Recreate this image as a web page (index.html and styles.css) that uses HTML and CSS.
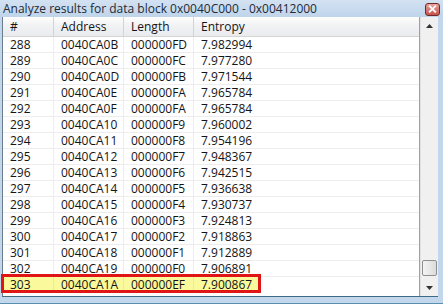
FILE: index.html
```html
<!DOCTYPE html>
<html>
<head>
<meta charset="utf-8">
<link rel="stylesheet" href="styles.css">
</head>
<body>
<div class="window">
  <div class="titlebar">
    <span class="title">Analyze results for data block 0x0040C000 - 0x00412000</span>
    <span class="close"><svg width="14" height="12" viewBox="0 0 14 12"><path d="M4 3 L10 9 M10 3 L4 9" stroke="#fff" stroke-width="2" stroke-linecap="square"/></svg></span>
  </div>
  <div class="body">
    <div class="list">
      <div class="row head">
        <div class="c c1">#</div><div class="c c2">Address</div><div class="c c3">Length</div><div class="c c4">Entropy</div>
      </div>
      <div class="row"><div class="c c1">288</div><div class="c c2">0040CA0B</div><div class="c c3">000000FD</div><div class="c c4">7.982994</div></div>
      <div class="row"><div class="c c1">289</div><div class="c c2">0040CA0C</div><div class="c c3">000000FC</div><div class="c c4">7.977280</div></div>
      <div class="row"><div class="c c1">290</div><div class="c c2">0040CA0D</div><div class="c c3">000000FB</div><div class="c c4">7.971544</div></div>
      <div class="row"><div class="c c1">291</div><div class="c c2">0040CA0E</div><div class="c c3">000000FA</div><div class="c c4">7.965784</div></div>
      <div class="row"><div class="c c1">292</div><div class="c c2">0040CA0F</div><div class="c c3">000000FA</div><div class="c c4">7.965784</div></div>
      <div class="row"><div class="c c1">293</div><div class="c c2">0040CA10</div><div class="c c3">000000F9</div><div class="c c4">7.960002</div></div>
      <div class="row"><div class="c c1">294</div><div class="c c2">0040CA11</div><div class="c c3">000000F8</div><div class="c c4">7.954196</div></div>
      <div class="row"><div class="c c1">295</div><div class="c c2">0040CA12</div><div class="c c3">000000F7</div><div class="c c4">7.948367</div></div>
      <div class="row"><div class="c c1">296</div><div class="c c2">0040CA13</div><div class="c c3">000000F6</div><div class="c c4">7.942515</div></div>
      <div class="row"><div class="c c1">297</div><div class="c c2">0040CA14</div><div class="c c3">000000F5</div><div class="c c4">7.936638</div></div>
      <div class="row"><div class="c c1">298</div><div class="c c2">0040CA15</div><div class="c c3">000000F4</div><div class="c c4">7.930737</div></div>
      <div class="row"><div class="c c1">299</div><div class="c c2">0040CA16</div><div class="c c3">000000F3</div><div class="c c4">7.924813</div></div>
      <div class="row"><div class="c c1">300</div><div class="c c2">0040CA17</div><div class="c c3">000000F2</div><div class="c c4">7.918863</div></div>
      <div class="row"><div class="c c1">301</div><div class="c c2">0040CA18</div><div class="c c3">000000F1</div><div class="c c4">7.912889</div></div>
      <div class="row"><div class="c c1">302</div><div class="c c2">0040CA19</div><div class="c c3">000000F0</div><div class="c c4">7.906891</div></div>
      <div class="row sel"><div class="c c1">303</div><div class="c c2">0040CA1A</div><div class="c c3">000000EF</div><div class="c c4">7.900867</div></div>
    </div>
    <div class="scroll">
      <div class="sbtn"><svg width="7" height="4" viewBox="0 0 7 4"><path d="M0 4 L3.5 0 L7 4 Z" fill="#333"/></svg></div>
      <div class="track"></div>
      <div class="thumb"></div>
      <div class="sbtn"><svg width="7" height="4" viewBox="0 0 7 4"><path d="M0 0 L3.5 4 L7 0 Z" fill="#333"/></svg></div>
    </div>
  </div>
</div>
</body>
</html>
```

FILE: styles.css
```css
html, body { margin: 0; padding: 0; }
body { width: 443px; height: 304px; overflow: hidden; font-family: "Open Sans", "Noto Sans", sans-serif; font-size: 12px; color: #141414; }
.window { width: 443px; height: 304px; background: #c2d6ec; display: flex; flex-direction: column; box-sizing: border-box; border-bottom: 1px solid #5b8fb0; }
.titlebar { height: 17px; display: flex; align-items: center; justify-content: space-between; padding: 0 3px 0 3px; background: linear-gradient(#d3e2f2, #bfd4ea); box-sizing: border-box; }
.title { color: #1e2a36; line-height: 17px; white-space: nowrap; }
.close { width: 15px; height: 13px; margin-top: 1px; border: 1px solid #6e2a2a; border-radius: 3px; background: linear-gradient(#e9a3a0, #c8504a); display: flex; align-items: center; justify-content: center; box-sizing: border-box; }
.body { flex: 1; display: flex; margin: 0 5px 6px 2px; border-left: 1px solid #6b7d8c; border-bottom: 1px solid #3e6a82; background: #fff; min-height: 0; }
.list { flex: 1; display: flex; flex-direction: column; border-right: 1px solid #a0a0a0; min-width: 0; }
.row { display: flex; height: 16px; line-height: 16px; border-bottom: 1px solid #ededed; box-sizing: border-box; position: relative; }
.row.head { height: 20px; line-height: 19px; background: linear-gradient(#ffffff, #f1f2f4 45%, #e9ebee); border-bottom: 1px solid #d5d5d5; }
.row .c { box-sizing: border-box; padding-left: 7px; border-right: 1px solid #ededed; white-space: nowrap; overflow: hidden; }
.row.head .c { border-right: 1px solid #d0d3d8; padding-left: 7px; }
.c1 { width: 51px; }
.c2 { width: 70px; }
.c3 { width: 70px; }
.c4 { flex: 1; border-right: none !important; }
.row.sel { border-bottom: none; }
.row.sel .c { background: #fafa9c; }
.row.sel .c1, .row.sel .c2, .row.sel .c3 { border-right-color: #ecec90; }
.row.sel .c4 { flex: none; width: 67px; }
.row.sel::after { content: ""; position: absolute; left: -2px; top: -3px; width: 260px; height: 19px; border: 3px solid #e01515; box-sizing: border-box; pointer-events: none; }
.scroll { width: 17px; display: flex; flex-direction: column; background: #f0f0f0; border-left: 1px solid #e2e2e2; }
.sbtn { height: 17px; display: flex; align-items: center; justify-content: center; flex: none; }
.track { flex: 1; }
.thumb { height: 16px; margin: 0 1px 3px; border: 1px solid #8e8f8f; border-radius: 2px; background: linear-gradient(90deg, #f4f4f4, #dcdcdc); box-sizing: border-box; flex: none; }
```
